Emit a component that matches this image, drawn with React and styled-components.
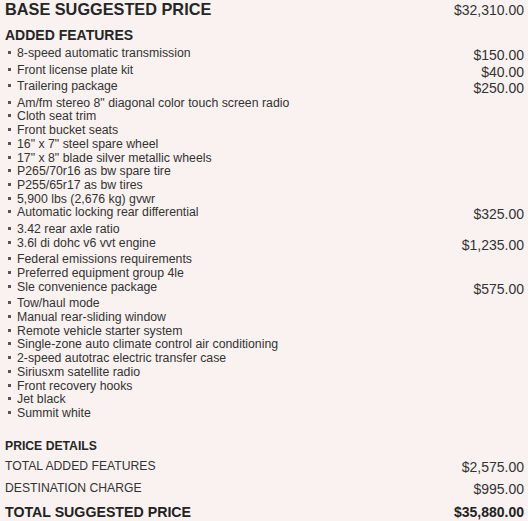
import React from "react";
import styled, { createGlobalStyle } from "styled-components";

const GlobalStyle = createGlobalStyle`
  body {
    margin: 0;
    background: #faf2f1;
    color: #333;
    font-family: "Liberation Sans", Arial, sans-serif;
  }
`;

const Sheet = styled.div`
  padding: 0 4px 0 5px;
`;

const HeaderRow = styled.div`
  display: flex;
  justify-content: space-between;
  align-items: baseline;
`;

const Title = styled.h1`
  margin: 0;
  font-size: 16.3px;
  font-weight: bold;
  color: #262626;
`;

const Price = styled.span`
  font-size: 14px;
  line-height: 16.6px;
  font-weight: ${(props) => (props.bold ? "bold" : "normal")};
  color: ${(props) => (props.bold ? "#222" : "#333")};
`;

const SectionTitle = styled.h2`
  margin: 8px 0 4px;
  font-size: 14px;
  font-weight: bold;
  color: #262626;
`;

const FeatureList = styled.ul`
  list-style: none;
  margin: 0;
  padding: 0;
`;

const FeatureItem = styled.li`
  display: flex;
  justify-content: space-between;
  align-items: flex-start;
`;

const FeatureName = styled.span`
  font-size: 12.3px;
  line-height: 13.7px;
`;

const Bullet = styled.i`
  display: inline-block;
  width: 3px;
  height: 3px;
  margin: 0 6px 0 3px;
  background: #555;
  vertical-align: 3px;
`;

const DetailsTitle = styled.h3`
  margin: 18px 0 0;
  font-size: 12.2px;
  font-weight: bold;
  color: #262626;
`;

const DetailRow = styled.div`
  display: flex;
  justify-content: space-between;
  align-items: flex-start;
  padding: 6px 0 0;
`;

const DetailLabel = styled.span`
  font-size: ${(props) => (props.total ? "14.2px" : "12.2px")};
  font-weight: ${(props) => (props.total ? "bold" : "normal")};
  color: ${(props) => (props.total ? "#222" : "#333")};
`;

const features = [
  ["8-speed automatic transmission", "$150.00"],
  ["Front license plate kit", "$40.00"],
  ["Trailering package", "$250.00"],
  ['Am/fm stereo 8" diagonal color touch screen radio'],
  ["Cloth seat trim"],
  ["Front bucket seats"],
  ['16" x 7" steel spare wheel'],
  ['17" x 8" blade silver metallic wheels'],
  ["P265/70r16 as bw spare tire"],
  ["P255/65r17 as bw tires"],
  ["5,900 lbs (2,676 kg) gvwr"],
  ["Automatic locking rear differential", "$325.00"],
  ["3.42 rear axle ratio"],
  ["3.6l di dohc v6 vvt engine", "$1,235.00"],
  ["Federal emissions requirements"],
  ["Preferred equipment group 4le"],
  ["Sle convenience package", "$575.00"],
  ["Tow/haul mode"],
  ["Manual rear-sliding window"],
  ["Remote vehicle starter system"],
  ["Single-zone auto climate control air conditioning"],
  ["2-speed autotrac electric transfer case"],
  ["Siriusxm satellite radio"],
  ["Front recovery hooks"],
  ["Jet black"],
  ["Summit white"],
];

const App = () => {
  return (
    <Sheet>
      <GlobalStyle />
      <HeaderRow>
        <Title>BASE SUGGESTED PRICE</Title>
        <Price>$32,310.00</Price>
      </HeaderRow>

      <SectionTitle>ADDED FEATURES</SectionTitle>
      <FeatureList>
        {features.map(([name, price]) => (
          <FeatureItem key={name}>
            <FeatureName>
              <Bullet />
              {name}
            </FeatureName>
            {price && <Price>{price}</Price>}
          </FeatureItem>
        ))}
      </FeatureList>

      <DetailsTitle>PRICE DETAILS</DetailsTitle>
      <DetailRow>
        <DetailLabel>TOTAL ADDED FEATURES</DetailLabel>
        <Price>$2,575.00</Price>
      </DetailRow>
      <DetailRow>
        <DetailLabel>DESTINATION CHARGE</DetailLabel>
        <Price>$995.00</Price>
      </DetailRow>
      <DetailRow>
        <DetailLabel total>TOTAL SUGGESTED PRICE</DetailLabel>
        <Price bold>$35,880.00</Price>
      </DetailRow>
    </Sheet>
  );
};

export default App;
